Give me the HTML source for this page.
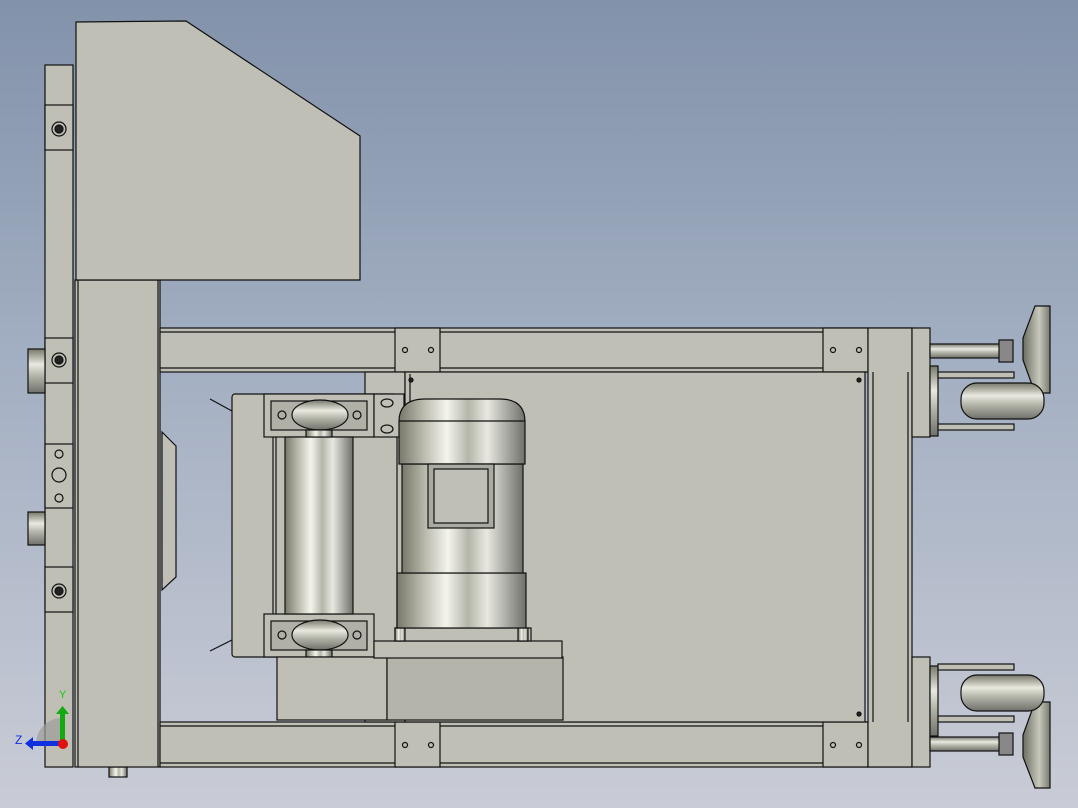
<!DOCTYPE html>
<html><head><style>
html,body{margin:0;padding:0;width:1078px;height:808px;overflow:hidden}
body{background:linear-gradient(#8292aa,#a3afc2 45%,#c9ccd6)}
svg{position:absolute;left:0;top:0}
</style></head><body>
<svg width="1078" height="808" viewBox="0 0 1078 808">
<defs>
<linearGradient id="cyl" x1="0" x2="1" y1="0" y2="0">
<stop offset="0" stop-color="#77786a"/><stop offset="0.2" stop-color="#bcbdb0"/><stop offset="0.38" stop-color="#f4f4ec"/><stop offset="0.55" stop-color="#b5b6aa"/><stop offset="0.7" stop-color="#e8e8e0"/><stop offset="1" stop-color="#6f706a"/>
</linearGradient>
<linearGradient id="cylv" x1="0" x2="0" y1="0" y2="1">
<stop offset="0" stop-color="#77786a"/><stop offset="0.35" stop-color="#e9e9e0"/><stop offset="0.6" stop-color="#b5b6aa"/><stop offset="1" stop-color="#6f706a"/>
</linearGradient>
<linearGradient id="disc" x1="0" x2="1"><stop offset="0" stop-color="#6c6d62"/><stop offset="0.6" stop-color="#c8c8bc"/><stop offset="1" stop-color="#7a7b70"/></linearGradient>
</defs>
<g stroke="#111" stroke-width="1.2" fill="#bfbfb6">
<!-- left plate -->
<rect x="45" y="65" width="28" height="702"/>
<rect x="45" y="105" width="28" height="45"/>
<rect x="45" y="338" width="28" height="45"/>
<rect x="45" y="567" width="28" height="45"/>
<rect x="45" y="444" width="28" height="64"/>
<circle cx="59" cy="129" r="7" fill="none"/><circle cx="59" cy="129" r="4" fill="#222"/>
<circle cx="59" cy="360" r="7" fill="none"/><circle cx="59" cy="360" r="4" fill="#222"/>
<circle cx="59" cy="591" r="7" fill="none"/><circle cx="59" cy="591" r="4" fill="#222"/>
<circle cx="59" cy="454" r="4" fill="none"/><circle cx="59" cy="475" r="7" fill="none"/><circle cx="59" cy="498" r="4" fill="none"/>
<rect x="28" y="349" width="17" height="44" fill="url(#cylv)"/>
<rect x="28" y="512" width="17" height="33" fill="url(#cylv)"/>
<rect x="109" y="767" width="18" height="10" fill="url(#cyl)"/>
<!-- post -->
<rect x="75" y="280" width="85" height="487"/>
<line x1="78" y1="280" x2="78" y2="767"/><line x1="158" y1="280" x2="158" y2="767"/>
<!-- top box -->
<polygon points="76,22 186,21 360,136 360,280 76,280"/>
<!-- top beam -->
<rect x="160" y="328" width="752" height="44"/>
<line x1="160" y1="332" x2="912" y2="332"/><line x1="160" y1="368" x2="912" y2="368"/>
<!-- bottom beam -->
<rect x="160" y="722" width="752" height="45"/>
<line x1="160" y1="726" x2="912" y2="726"/><line x1="160" y1="763" x2="912" y2="763"/>
<rect x="395" y="328" width="45" height="44"/><rect x="823" y="328" width="45" height="44"/>
<rect x="395" y="722" width="45" height="45"/><rect x="823" y="722" width="45" height="45"/>
<g fill="none"><circle cx="405" cy="350" r="2.5"/><circle cx="431" cy="350" r="2.5"/><circle cx="833" cy="350" r="2.5"/><circle cx="859" cy="350" r="2.5"/>
<circle cx="405" cy="745" r="2.5"/><circle cx="431" cy="745" r="2.5"/><circle cx="833" cy="745" r="2.5"/><circle cx="859" cy="745" r="2.5"/></g>
<!-- right vertical -->
<rect x="868" y="328" width="44" height="439"/>
<line x1="873" y1="372" x2="873" y2="722"/><line x1="908" y1="372" x2="908" y2="722"/>
<!-- sub vertical near roller -->
<rect x="365" y="372" width="40" height="350"/>
<!-- motor plate -->
<rect x="405" y="372" width="460" height="350"/>
<line x1="410" y1="374" x2="410" y2="720"/>
<circle cx="859" cy="380" r="2" fill="#222"/><circle cx="859" cy="714" r="2" fill="#222"/><circle cx="411" cy="380" r="2" fill="#222"/>
<!-- chute left -->
<polygon points="162,432 176,446 176,577 162,590"/>
<line x1="210" y1="399" x2="232" y2="411"/><line x1="210" y1="651" x2="232" y2="640"/>
<!-- roller frame -->
<rect x="232" y="394" width="165" height="263" rx="3"/>
<rect x="264" y="394" width="110" height="43"/>
<rect x="264" y="614" width="110" height="43"/>
<rect x="374" y="394" width="30" height="43"/>
<rect x="271" y="401" width="96" height="29" fill="#b0b0a6"/>
<rect x="271" y="621" width="96" height="29" fill="#b0b0a6"/>
<ellipse cx="320" cy="415" rx="28" ry="15" fill="url(#cylv)"/>
<ellipse cx="320" cy="635" rx="28" ry="15" fill="url(#cylv)"/>
<circle cx="282" cy="415" r="4" fill="none"/><circle cx="357" cy="415" r="4" fill="none"/>
<circle cx="282" cy="635" r="4" fill="none"/><circle cx="357" cy="635" r="4" fill="none"/>
<ellipse cx="387" cy="403" rx="6" ry="4" fill="none"/><ellipse cx="387" cy="429" rx="6" ry="4" fill="none"/>
<line x1="273" y1="437" x2="273" y2="614"/><line x1="276" y1="437" x2="276" y2="614"/>
<rect x="285" y="437" width="68" height="177" fill="url(#cyl)"/>
<rect x="306" y="430" width="26" height="7" fill="url(#cyl)"/>
<rect x="306" y="650" width="26" height="7" fill="url(#cyl)"/>
<!-- base boxes -->
<rect x="277" y="657" width="110" height="63"/>
<rect x="387" y="657" width="176" height="63" fill="#b4b4ab"/>
<rect x="374" y="641" width="188" height="17"/>
<!-- motor -->
<rect x="395" y="628" width="136" height="13"/>
<rect x="395" y="628" width="10" height="13" fill="url(#cyl)"/><rect x="518" y="628" width="10" height="13" fill="url(#cyl)"/>
<rect x="397" y="573" width="129" height="55" fill="url(#cyl)"/>
<rect x="402" y="464" width="121" height="109" fill="url(#cyl)"/>
<path d="M399,464 V422 Q399,399 425,399 H500 Q525,399 525,422 V464 Z" fill="url(#cyl)"/>
<line x1="399" y1="421" x2="525" y2="421"/>
<rect x="428" y="464" width="66" height="64" fill="#a9aaa0"/>
<rect x="434" y="469" width="54" height="54" fill="#bfbfb6"/>
<!-- right casters -->
<rect x="912" y="328" width="18" height="109"/>
<rect x="912" y="657" width="18" height="110"/>
<rect x="930" y="344" width="70" height="14" fill="url(#cylv)"/>
<rect x="930" y="737" width="70" height="14" fill="url(#cylv)"/>
<rect x="999" y="340" width="14" height="22" fill="#888"/>
<rect x="999" y="733" width="14" height="22" fill="#888"/>
<polygon points="1023,338 1035,306 1050,306 1050,393 1035,393 1023,360" fill="url(#disc)"/>
<polygon points="1023,735 1035,702 1050,702 1050,788 1035,788 1023,757" fill="url(#disc)"/>
<rect x="930" y="366" width="8" height="70" fill="url(#cylv)"/>
<rect x="930" y="666" width="8" height="70" fill="url(#cylv)"/>
<rect x="938" y="372" width="76" height="6"/><rect x="938" y="424" width="76" height="6"/>
<rect x="938" y="664" width="76" height="6"/><rect x="938" y="716" width="76" height="6"/>
<rect x="961" y="383" width="83" height="36" rx="16" fill="url(#cylv)"/>
<rect x="961" y="675" width="83" height="36" rx="16" fill="url(#cylv)"/>
</g>
<!-- axis triad -->
<path d="M36,744 A26,26 0 0 1 62,718 L62,744 Z" fill="#9c9c98" opacity="0.7"/>
<rect x="60" y="713" width="5" height="30" fill="#1a1"/><polygon points="56,714 62.5,706 69,714" fill="#1a1"/>
<rect x="32" y="741" width="30" height="5" fill="#1030e0"/><polygon points="33,737 25,743.5 33,750" fill="#1030e0"/>
<circle cx="63" cy="744" r="5" fill="#e01010"/>
<text x="59" y="698" font-family="Liberation Sans,sans-serif" font-size="11" fill="#1c1">Y</text>
<text x="15" y="744" font-family="Liberation Sans,sans-serif" font-size="12" fill="#1030e0">Z</text>
</svg>
</body></html>
